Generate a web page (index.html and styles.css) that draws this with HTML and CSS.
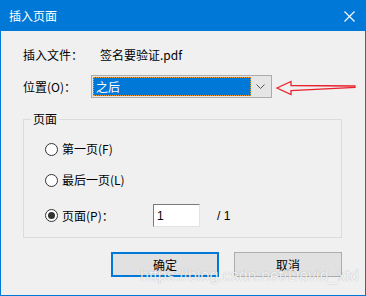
FILE: index.html
```html
<!DOCTYPE html>
<html lang="zh-CN">
<head>
    <meta charset="UTF-8">
    <title>插入页面</title>
    <link rel="stylesheet" href="styles.css">
</head>
<body>
    <div class="window">
        <div class="titlebar">
            <span class="title">插入页面</span>
            <svg class="close" width="11" height="11" viewBox="0 0 11 11">
                <path d="M0.5 0.5 L10.5 10.5 M10.5 0.5 L0.5 10.5" stroke="#fff" stroke-width="1.1" fill="none"/>
            </svg>
        </div>

        <div class="content">
            <div class="row row-file">
                <span class="label file-label">插入文件：</span>
                <span>签名要验证.pdf</span>
            </div>
            <div class="row row-pos">
                <span class="label pos-label">位置(O)：</span>
                <div class="select">
                    <div class="select-value">之后</div>
                    <div class="select-arrow">
                        <svg width="9" height="6" viewBox="0 0 9 6">
                            <path d="M0.5 0.5 L4.5 4.5 L8.5 0.5" stroke="#555" stroke-width="1" fill="none"/>
                        </svg>
                    </div>
                </div>
            </div>

            <fieldset class="group">
                <legend>页面</legend>
                <div class="radio-row">
                    <span class="radio"></span>
                    <span>第一页(F)</span>
                </div>
                <div class="radio-row">
                    <span class="radio"></span>
                    <span>最后一页(L)</span>
                </div>
                <div class="radio-row page-row">
                    <div class="page-label">
                        <span class="radio checked"></span>
                        <span>页面(P)：</span>
                    </div>
                    <div class="page-input">1</div>
                    <span class="page-total">/ 1</span>
                </div>
            </fieldset>

            <div class="buttons">
                <button class="btn btn-default">确定</button>
                <button class="btn">取消</button>
            </div>
        </div>

        <svg class="red-arrow" width="366" height="296" viewBox="0 0 366 296">
            <path d="M277 88 L291 81.5 L291 85.5 L355 86 L355 87.5 L291 90.5 L291 94.5 Z" stroke="#e8232e" stroke-width="1.3" fill="none" stroke-linejoin="miter"/>
        </svg>
        <div class="watermark">https://blog.csdn.net/David_xtd</div>
    </div>
</body>
</html>
```

FILE: styles.css
```css
:root {
    --blue: #0078d7;
    --face: #f0f0f0;
}
* {
    box-sizing: border-box;
}
body {
    margin: 0;
    font-family: "Noto Sans CJK SC", "Liberation Sans", sans-serif;
    font-size: 12px;
    color: #000;
    background: var(--face);
}
.window {
    position: relative;
    width: 366px;
    height: 296px;
    border: 1px solid var(--blue);
    background: var(--face);
}
.titlebar {
    height: 30px;
    background: var(--blue);
    color: #fff;
    display: flex;
    align-items: center;
    justify-content: space-between;
    padding: 0 10px 0 8px;
}
.title {
    line-height: 16px;
}
.close {
    display: block;
}
.content {
    padding: 16px 23px 0 22px;
}
.row {
    display: flex;
    align-items: center;
    line-height: 16px;
}
.file-label {
    width: 77px;
}
.row-pos {
    margin-top: 12px;
    height: 23px;
}
.pos-label {
    width: 68px;
}
.select {
    width: 181px;
    height: 23px;
    border: 1px solid #acacac;
    background: #e5e5e5;
    display: flex;
    padding: 1px;
}
.select-value {
    flex: 1;
    background: var(--blue);
    color: #fff;
    border: 1px dotted #f39a2c;
    padding-left: 2px;
    line-height: 17px;
}
.select-arrow {
    width: 19px;
    display: flex;
    align-items: center;
    justify-content: center;
}
.group {
    margin: 13px 0 0;
    width: 319px;
    height: 127px;
    border: 1px solid #dcdcdc;
    padding: 12px 10px 0 21px;
}
.group legend {
    padding: 0 2px;
    margin-left: -14px;
    line-height: 16px;
}
.radio-row {
    display: flex;
    align-items: center;
    height: 20px;
    line-height: 16px;
}
.radio-row + .radio-row {
    margin-top: 11px;
}
.radio {
    width: 13px;
    height: 13px;
    border: 1px solid #333;
    border-radius: 50%;
    background: #fff;
    margin-right: 4px;
    display: flex;
    align-items: center;
    justify-content: center;
}
.radio.checked::after {
    content: "";
    width: 7px;
    height: 7px;
    border-radius: 50%;
    background: #333;
}
.page-row {
    height: 23px;
}
.radio-row.page-row {
    margin-top: 14px;
}
.page-label {
    width: 108px;
    display: flex;
    align-items: center;
}
.page-input {
    width: 47px;
    height: 23px;
    background: #fff;
    border: 1px solid #e3e3e3;
    border-top: 1px solid #7a7a7a;
    border-left: 1px solid #7a7a7a;
    padding: 3px 0 0 3px;
    font-family: "Liberation Sans", sans-serif;
    font-size: 12px;
}
.page-total {
    margin-left: 17px;
    font-family: "Liberation Sans", sans-serif;
}
.buttons {
    display: flex;
    justify-content: flex-end;
    gap: 15px;
    margin-top: 14px;
}
.btn {
    width: 108px;
    height: 25px;
    background: #e1e1e1;
    border: 1px solid #adadad;
    font-family: inherit;
    font-size: 12px;
    line-height: 10px;
    color: #000;
    padding: 0;
}
.btn-default {
    border: 2px solid var(--blue);
}
.red-arrow {
    position: absolute;
    left: -1px;
    top: -1px;
    pointer-events: none;
}
.watermark {
    position: absolute;
    left: 139px;
    top: 269px;
    font-family: "Liberation Sans", sans-serif;
    font-size: 16px;
    line-height: 12px;
    color: rgba(255, 255, 255, 0.85);
    text-shadow: 0 0 1px rgba(0, 0, 0, 0.3);
    white-space: nowrap;
}
```
